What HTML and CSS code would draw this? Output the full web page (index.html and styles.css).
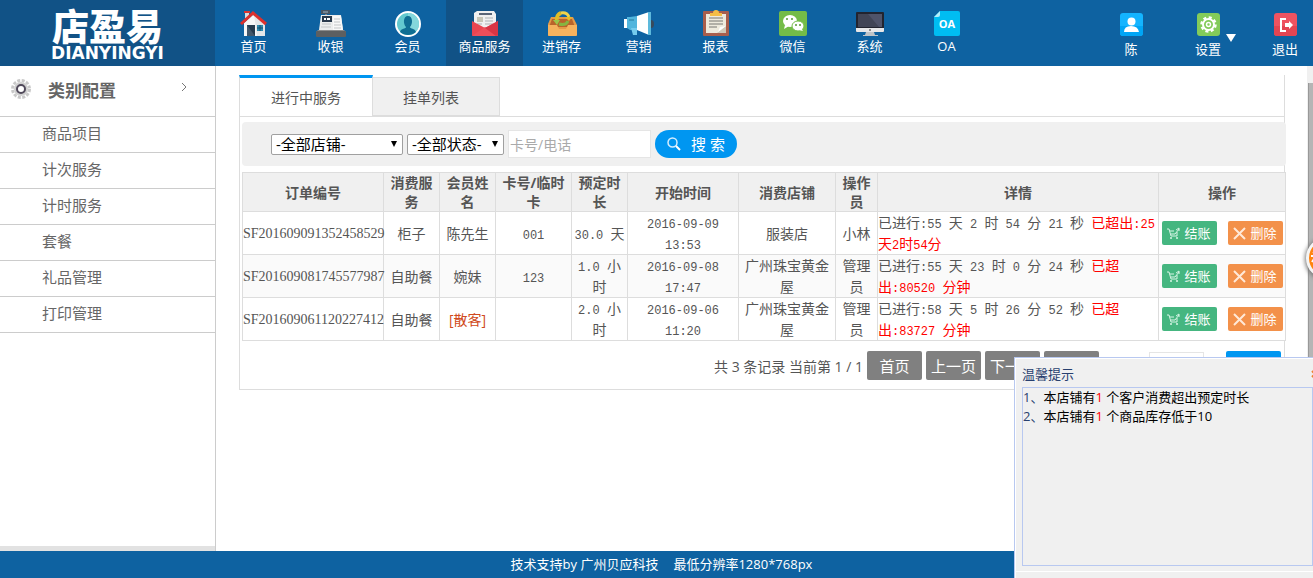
FILE: index.html
```html
<!DOCTYPE html>
<html lang="zh-CN">
<head>
    <meta charset="UTF-8">
    <meta name="viewport" content="width=device-width, initial-scale=1.0">
    <title>店盈易</title>
    <link rel="stylesheet" href="styles.css">
</head>
<body>
    <header class="header">
        <a class="logo" href="#">
            <span class="logo-cn">店盈易</span>
            <span class="logo-en">DIANYINGYI</span>
        </a>
        <nav class="nav">
            <a class="nav-item" href="#">
                <svg width="30" height="28" viewBox="0 0 30 28">
                    <path d="M6 1h4v7H6z" fill="#d7dbdf"/><path d="M5 1h6v2H5z" fill="#d9342f"/>
                    <path d="M5 13L15 4l11 9v13H5z" fill="#f7f7f7"/><path d="M15 4l11 9v13H18z" fill="#e4e6e8"/>
                    <path d="M8 15h8v11H8z" fill="#263a4d"/><path d="M8 15l8 11H8z" fill="#42576a"/>
                    <path d="M18 15h6v6h-6z" fill="#2c8bb0"/><path d="M21 15v6M18 18h6" stroke="#164f6e"/>
                    <path d="M2 14L14 3l13 11" fill="none" stroke="#dc302d" stroke-width="3"/>
                </svg>
                <span>首页</span>
            </a>
            <a class="nav-item" href="#">
                <svg width="30" height="28" viewBox="0 0 30 28">
                    <path d="M5 0h9v4H5z" fill="#485563"/><path d="M7 2h5" stroke="#9eb3c2"/><path d="M9 4h2v3H9z" fill="#778490"/>
                    <path d="M5 5h20l2 15H3z" fill="#eceded"/><path d="M17 6h8l2 14H17z" fill="#f8f8f8"/>
                    <path d="M6 6h10v6H6z" fill="#29394c"/><path d="M8 9h2M11 9h3" stroke="#fff" stroke-width="2"/>
                    <path d="M18 9h6M18 12h6M6 14h9M5 17h10M18 15h7M18 18h7" stroke="#c2c5c7"/>
                    <path d="M2 20h26l2 2H0z" fill="#8b8b8b"/><rect y="21" width="30" height="6" rx="1" fill="#5d5f61"/>
                </svg>
                <span>收银</span>
            </a>
            <a class="nav-item" href="#">
                <svg width="30" height="28" viewBox="0 0 30 28">
                    <circle cx="15" cy="14" r="12" fill="#62c9cf" stroke="#fff" stroke-width="2"/>
                    <path d="M15 3a11 11 0 0 1 0 22z" fill="#84d7dc"/>
                    <path d="M7 22c1-4 6-3 6-5-3-3-3-11 2-11s5 8 2 11c0 2 5 1 6 5-4 4-12 4-16 0z" fill="#0f6e93"/>
                </svg>
                <span>会员</span>
            </a>
            <a class="nav-item active" href="#">
                <svg width="30" height="28" viewBox="0 0 30 28">
                    <path d="M4 3l3-2h17l2 3v17H4z" fill="#f0f0f0"/>
                    <path d="M9 4h13" stroke="#596577" stroke-width="2"/><path d="M7 7h6v5H7z" fill="#c6c5b7"/>
                    <path d="M15 8h8M15 11h8M15 14h8M7 14h5" stroke="#adb2b5"/>
                    <path d="M2 11l13 7 13-7v14q0 1-1 1H3q-1 0-1-1z" fill="#eb4551"/>
                    <path d="M2 26l13-9 13 9z" fill="#ee4e5a"/><path d="M28 11L15 18l11 8 2-1z" fill="#d93545"/>
                </svg>
                <span>商品服务</span>
            </a>
            <a class="nav-item" href="#">
                <svg width="30" height="28" viewBox="0 0 30 28">
                    <path d="M4 7h22l4 8v10q0 1-2 1H2q-1 0-1-1V14z" fill="#e39a48"/><path d="M5 9h20l3 8H2z" fill="#b9642b"/>
                    <path d="M1 15h9l2 4h7l2-4h9v10q0 1-2 1H3q-2 0-2-1z" fill="#f5b25e"/>
                    <path d="M10 10a6 6 0 0 1 4-7" fill="none" stroke="#dfbc27" stroke-width="4"/>
                    <path d="M14 3q6-1 8 4" fill="none" stroke="#f0d34a" stroke-width="3"/><path d="M18 7h7l-3 4z" fill="#e5bd28"/>
                    <path d="M21 11q-2 5-9 3" fill="none" stroke="#86b540" stroke-width="3"/><path d="M6 10h7l-3 5z" fill="#9bc44a"/>
                </svg>
                <span>进销存</span>
            </a>
            <a class="nav-item" href="#">
                <svg width="30" height="28" viewBox="0 0 30 28">
                    <ellipse cx="27" cy="14" rx="3" ry="4" fill="#394a5b"/>
                    <path d="M0 9h4v9H0z" fill="#fff"/><path d="M3 7h3l7-1v14H6l-3-2z" fill="#51b5dd"/>
                    <path d="M7 18h6v7H9z" fill="#76cbed"/><path d="M13 6l12-4v23l-12-5z" fill="#fff"/><path d="M24 2h3v23h-3z" fill="#5db9dc"/>
                    <path d="M5 10h5" stroke="#267c9f"/>
                </svg>
                <span>营销</span>
            </a>
            <a class="nav-item" href="#">
                <svg width="30" height="28" viewBox="0 0 30 28">
                    <rect x="2" y="1" width="26" height="25" rx="1" fill="#a85e4d"/><path d="M5 4h20v19H5z" fill="#eeeadd"/>
                    <path d="M9 3h3a3 3 0 0 1 6 0h3v3H9z" fill="#f4bd45"/>
                    <path d="M8 8h14M8 11h14M8 14h14M8 17h8" stroke="#777772"/><path d="M16 23l9-7v7z" fill="#cfc8b8"/><path d="M17 22l2-5 6-1z" fill="#fff"/>
                </svg>
                <span>报表</span>
            </a>
            <a class="nav-item" href="#">
                <svg width="30" height="28" viewBox="0 0 30 28">
                    <rect x="1" y="1" width="28" height="25" rx="2" fill="#74bc48"/>
                    <ellipse cx="12" cy="11" rx="7" ry="6" fill="#fff"/><path d="M7 15l-1 4 5-3z" fill="#fff"/>
                    <ellipse cx="20" cy="16" rx="6" ry="5" fill="#fff" stroke="#74bc48"/><path d="M21 20l4 1-2-3z" fill="#fff"/>
                    <g fill="#579a35"><circle cx="9" cy="9" r="1"/><circle cx="14" cy="9" r="1"/><circle cx="18" cy="15" r="1"/><circle cx="22" cy="15" r="1"/></g>
                </svg>
                <span>微信</span>
            </a>
            <a class="nav-item" href="#">
                <svg width="30" height="28" viewBox="0 0 30 28">
                    <rect x="1" y="2" width="28" height="20" rx="1" fill="#22242f"/><path d="M3 4h24v13H3z" fill="#414556"/><path d="M13 4h14v13H24z" fill="#50546a"/>
                    <path d="M1 18h28v3q0 1-1 1H2q-1 0-1-1z" fill="#e6e7e9"/><path d="M15 19v2" stroke="#333"/>
                    <path d="M11 22h8l1 3h3v1H8v-1h2z" fill="#bfc4c8"/>
                </svg>
                <span>系统</span>
            </a>
            <a class="nav-item" href="#">
                <svg width="30" height="28" viewBox="0 0 30 28">
                    <path d="M8 1h18q2 0 2 2v21q0 2-2 2H4q-2 0-2-2V7z" fill="#00bdf2"/><path d="M2 7l6-6v4q0 2-2 2z" fill="#b2edfb"/>
                    <text class="oa-mark" x="15" y="18" text-anchor="middle">OA</text>
                </svg>
                <span>OA</span>
            </a>
        </nav>
        <div class="user-nav">
            <a class="user-item" href="#">
                <svg width="23" height="23" viewBox="0 0 23 23">
                    <rect width="23" height="23" rx="3" fill="#14b4ff"/><path d="M0 13h23v7q0 3-3 3H3q-3 0-3-3z" fill="#00a5f5"/>
                    <circle cx="11.500" cy="8.500" r="4" fill="#fff"/><path d="M4 19q0-6 7-6t8 6z" fill="#fff"/>
                </svg>
                <span>陈</span>
            </a>
            <a class="user-item has-menu" href="#">
                <svg width="23" height="23" viewBox="0 0 23 23">
                    <rect width="23" height="23" rx="3" fill="#83cb5a"/>
                    <circle cx="11.500" cy="11.500" r="7" fill="none" stroke="#fff" stroke-width="2.500" stroke-dasharray="3 2.500"/>
                    <circle cx="11.500" cy="11.500" r="5.500" fill="none" stroke="#fff" stroke-width="2"/><circle cx="11.500" cy="11.500" r="2" fill="none" stroke="#fff" stroke-width="1.500"/>
                </svg>
                <span>设置</span>
            </a>
            <a class="user-item" href="#">
                <svg width="23" height="23" viewBox="0 0 23 23">
                    <rect width="23" height="23" rx="3" fill="#ee5361"/><path d="M0 13h23v7q0 3-3 3H3q-3 0-3-3z" fill="#e44552"/>
                    <path d="M12 6H7v12h5" fill="none" stroke="#fff" stroke-width="2"/><path d="M11 10h4V8l4 4-4 4v-2h-4z" fill="#fff"/>
                </svg>
                <span>退出</span>
            </a>
        </div>
    </header>

    <div class="layout">
        <aside class="sidebar">
            <div class="side-title">
                <svg width="22" height="22" viewBox="0 0 22 22">
                    <circle cx="11" cy="11" r="8.500" fill="none" stroke="#c9c9c9" stroke-width="3" stroke-dasharray="3 1.500"/>
                    <circle cx="11" cy="11" r="7" fill="#cfcfcf"/><circle cx="11" cy="11" r="4" fill="#fff" stroke="#50495a" stroke-width="2"/>
                </svg>
                <h2>类别配置</h2>
                <svg class="side-arrow" width="6" height="8" viewBox="0 0 6 8"><path d="M1 0l4 4-4 4" fill="none" stroke="#777"/></svg>
            </div>
            <ul class="side-menu">
                <li><a href="#">商品项目</a></li>
                <li><a href="#">计次服务</a></li>
                <li><a href="#">计时服务</a></li>
                <li><a href="#">套餐</a></li>
                <li><a href="#">礼品管理</a></li>
                <li><a href="#">打印管理</a></li>
            </ul>
            <div class="side-foot"></div>
        </aside>

        <main class="main">
            <div class="tabs">
                <a class="tab current" href="#">进行中服务</a>
                <a class="tab" href="#">挂单列表</a>
            </div>
            <div class="panel">
                <form class="filter">
                    <div class="select select-shop">
                        <select aria-label="店铺"><option>-全部店铺-</option></select>
                    </div>
                    <div class="select select-state">
                        <select aria-label="状态"><option>-全部状态-</option></select>
                    </div>
                    <input class="keyword" type="text" placeholder="卡号/电话" aria-label="卡号/电话">
                    <button class="search" type="button">
                        <svg width="14" height="14" viewBox="0 0 14 14"><circle cx="5.500" cy="5.500" r="4.500" fill="none" stroke="#d3edff" stroke-width="1.500"/><path d="M9 9l4 4" stroke="#fff" stroke-width="2"/></svg>
                        搜 索
                    </button>
                </form>

                <table class="orders">
                    <colgroup>
                        <col class="c-no"><col class="c-short"><col class="c-short"><col class="c-card"><col class="c-short">
                        <col class="c-time"><col class="c-shop"><col class="c-oper"><col><col class="c-act">
                    </colgroup>
                    <thead>
                        <tr>
                            <th>订单编号</th>
                            <th>消费服务</th>
                            <th>会员姓名</th>
                            <th>卡号/临时卡</th>
                            <th>预定时长</th>
                            <th>开始时间</th>
                            <th>消费店铺</th>
                            <th>操作员</th>
                            <th>详情</th>
                            <th>操作</th>
                        </tr>
                    </thead>
                    <tbody>
                        <tr>
                            <td class="order-no">SF201609091352458529</td>
                            <td>柜子</td>
                            <td>陈先生</td>
                            <td><span class="num">001</span></td>
                            <td><span class="num">30.0 </span>天</td>
                            <td><span class="num">2016-09-09 13:53</span></td>
                            <td>服装店</td>
                            <td>小林</td>
                            <td class="detail">已进行<span class="num">:55 </span>天<span class="num"> 2 </span>时<span class="num"> 54 </span>分<span class="num"> 21 </span>秒<span class="num"> </span><span class="over">已超出<span class="num">:25</span>天<span class="num">2</span>时<span class="num">54</span>分</span></td>
                            <td>
                                <div class="actions">
                                    <button class="btn btn-pay" type="button"><svg width="13" height="13" viewBox="0 0 13 13"><path d="M0 2h2l2 7h6M3 4h4M4 7h4M8 7l4-5M9 3l3-2v3M10 5v4" fill="none" stroke="#d8f5e6"/><circle cx="4" cy="11" r="1" fill="#d8f5e6"/><circle cx="10" cy="11" r="1" fill="#d8f5e6"/></svg>结账</button>
                                    <button class="btn btn-del" type="button"><svg width="13" height="13" viewBox="0 0 13 13"><path d="M1 1l11 11M12 1L1 12" stroke="#ffe9d7" stroke-width="2"/></svg>删除</button>
                                </div>
                            </td>
                        </tr>
                        <tr>
                            <td class="order-no">SF201609081745577987</td>
                            <td>自助餐</td>
                            <td>婉妹</td>
                            <td><span class="num">123</span></td>
                            <td><span class="num">1.0 </span>小时</td>
                            <td><span class="num">2016-09-08 17:47</span></td>
                            <td>广州珠宝黄金屋</td>
                            <td>管理员</td>
                            <td class="detail">已进行<span class="num">:55 </span>天<span class="num"> 23 </span>时<span class="num"> 0 </span>分<span class="num"> 24 </span>秒<span class="num"> </span><span class="over">已超出<span class="num">:80520 </span>分钟</span></td>
                            <td>
                                <div class="actions">
                                    <button class="btn btn-pay" type="button"><svg width="13" height="13" viewBox="0 0 13 13"><path d="M0 2h2l2 7h6M3 4h4M4 7h4M8 7l4-5M9 3l3-2v3M10 5v4" fill="none" stroke="#d8f5e6"/><circle cx="4" cy="11" r="1" fill="#d8f5e6"/><circle cx="10" cy="11" r="1" fill="#d8f5e6"/></svg>结账</button>
                                    <button class="btn btn-del" type="button"><svg width="13" height="13" viewBox="0 0 13 13"><path d="M1 1l11 11M12 1L1 12" stroke="#ffe9d7" stroke-width="2"/></svg>删除</button>
                                </div>
                            </td>
                        </tr>
                        <tr>
                            <td class="order-no">SF201609061120227412</td>
                            <td>自助餐</td>
                            <td class="guest">[散客]</td>
                            <td></td>
                            <td><span class="num">2.0 </span>小时</td>
                            <td><span class="num">2016-09-06 11:20</span></td>
                            <td>广州珠宝黄金屋</td>
                            <td>管理员</td>
                            <td class="detail">已进行<span class="num">:58 </span>天<span class="num"> 5 </span>时<span class="num"> 26 </span>分<span class="num"> 52 </span>秒<span class="num"> </span><span class="over">已超出<span class="num">:83727 </span>分钟</span></td>
                            <td>
                                <div class="actions">
                                    <button class="btn btn-pay" type="button"><svg width="13" height="13" viewBox="0 0 13 13"><path d="M0 2h2l2 7h6M3 4h4M4 7h4M8 7l4-5M9 3l3-2v3M10 5v4" fill="none" stroke="#d8f5e6"/><circle cx="4" cy="11" r="1" fill="#d8f5e6"/><circle cx="10" cy="11" r="1" fill="#d8f5e6"/></svg>结账</button>
                                    <button class="btn btn-del" type="button"><svg width="13" height="13" viewBox="0 0 13 13"><path d="M1 1l11 11M12 1L1 12" stroke="#ffe9d7" stroke-width="2"/></svg>删除</button>
                                </div>
                            </td>
                        </tr>
                    </tbody>
                </table>

                <div class="pager">
                    <span>共 3 条记录 当前第 1 / 1</span>
                    <button class="page-btn" type="button">首页</button>
                    <button class="page-btn" type="button">上一页</button>
                    <button class="page-btn" type="button">下一页</button>
                    <button class="page-btn" type="button">末页</button>
                    <input class="page-no" type="text" aria-label="页码">
                    <button class="page-btn page-go" type="button">跳转</button>
                </div>
            </div>
        </main>
        <div class="scroll"><div class="scroll-thumb"></div></div>
    </div>

    <footer class="footer">
        <span>技术支持by 广州贝应科技</span>
        <span>最低分辨率1280*768px</span>
    </footer>

    <a class="float-ball" href="#" aria-label="客服">
        <svg width="12" height="20" viewBox="0 0 12 20"><path d="M3 4l3 2M1 8h8M6 8l-4 6M5 12v6" fill="none" stroke="#fff" stroke-width="2"/></svg>
    </a>

    <section class="notice">
        <div class="notice-head">
            <h3>温馨提示</h3>
            <button class="notice-close" type="button" aria-label="关闭"><svg width="8" height="8" viewBox="0 0 8 8"><path d="M1 1l6 6M7 1L1 7" stroke="#f08030" stroke-width="2"/></svg></button>
        </div>
        <div class="notice-body">
            <p>1、<a href="#">本店铺有<em>1</em> 个客户消费超出预定时长</a></p>
            <p>2、<a href="#">本店铺有<em>1</em> 个商品库存低于10</a></p>
        </div>
    </section>
</body>
</html>
```
FILE: styles.css
```css
* {
    box-sizing: border-box;
}

body {
    margin: 0;
    min-height: 100vh;
    display: flex;
    flex-direction: column;
    font-family: "Open Sans", "Noto Sans CJK SC", sans-serif;
    font-size: 14px;
    color: #555;
    background: #fff;
    overflow: hidden;
}

a {
    color: inherit;
    text-decoration: none;
}

h2, h3, p, ul {
    margin: 0;
    padding: 0;
}

svg {
    display: block;
    flex: none;
}

button, input, select {
    font-family: inherit;
    margin: 0;
}

/* header */
.header {
    display: flex;
    height: 66px;
    background: #0e62a1;
    color: #fff;
    font-size: 13px;
}

.logo {
    width: 215px;
    display: flex;
    flex-direction: column;
    align-items: center;
    padding-top: 8px;
    background: #115286;
}

.logo-cn {
    font-size: 37px;
    font-weight: 900;
    line-height: 37px;
}

.logo-en {
    font-family: "DejaVu Sans", sans-serif;
    font-size: 17px;
    font-weight: bold;
    line-height: 17px;
}

.nav {
    display: flex;
    flex: 1;
}

.nav-item {
    width: 77px;
    display: flex;
    flex-direction: column;
    align-items: center;
    padding-top: 10px;
    line-height: 17px;
}

.nav-item.active {
    background: #115286;
}

.oa-mark {
    font: bold 11px "Open Sans", sans-serif;
    fill: #fff;
}

.user-nav {
    display: flex;
    gap: 49px;
    padding: 13px 14px 0 0;
}

.user-item {
    position: relative;
    width: 28px;
    display: flex;
    flex-direction: column;
    align-items: center;
    gap: 5px;
    line-height: 17px;
}

.has-menu::after {
    content: "";
    position: absolute;
    left: 32px;
    top: 21px;
    border: 5px solid transparent;
    border-top: 8px solid #fff;
    border-bottom: 0;
}

/* layout */
.layout {
    display: flex;
    flex: 1;
}

.sidebar {
    width: 216px;
    display: flex;
    flex-direction: column;
    border-right: 1px solid #ccc;
}

.side-title {
    display: flex;
    align-items: center;
    height: 51px;
    padding: 0 28px 4px 10px;
    border-bottom: 1px solid #ccc;
}

.side-title h2 {
    flex: 1;
    margin-left: 16px;
    font-size: 17px;
    color: #666;
}

.side-arrow {
    margin-bottom: 4px;
}

.side-menu {
    list-style: none;
}

.side-menu a {
    display: block;
    height: 36px;
    padding-left: 42px;
    border-bottom: 1px solid #ccc;
    font-size: 15px;
    line-height: 32px;
    color: #666;
}

.side-foot {
    height: 5px;
    margin-top: auto;
    background: #e2e2e2;
}

.main {
    flex: 1;
    min-width: 0;
    padding: 9px 22px 0 23px;
}

.tabs {
    display: flex;
    align-items: flex-end;
    height: 41px;
    border-right: 1px solid #ddd;
}

.tab {
    width: 127px;
    height: 39px;
    padding-right: 10px;
    border: 1px solid #ddd;
    border-left: 0;
    background: #f0f0f0;
    line-height: 39px;
    text-align: center;
}

.tab.current {
    width: 134px;
    height: 41px;
    padding: 0;
    border-left: 1px solid #ddd;
    border-top: 3px solid #0096f1;
    border-bottom: 0;
    background: #fff;
}

.panel {
    border: 1px solid #ddd;
    padding: 5px 0 9px 2px;
}

.filter {
    display: flex;
    align-items: center;
    gap: 4px;
    height: 44px;
    margin-right: -2px;
    padding-left: 29px;
    border-radius: 4px;
    background: #f0f0f0;
}

.select {
    position: relative;
}

.select::after {
    content: "";
    position: absolute;
    right: 6px;
    top: 7px;
    border: 3px solid transparent;
    border-top: 6px solid #000;
    border-bottom: 0;
    pointer-events: none;
}

.select select {
    display: block;
    width: 100%;
    height: 21px;
    padding: 0 4px;
    appearance: none;
    border: 1px solid #a0a0a0;
    border-radius: 2px;
    background: #fff;
    color: #000;
    font-size: 15px;
    line-height: 19px;
}

.select-shop {
    width: 132px;
}

.select-state {
    width: 97px;
}

.keyword {
    width: 143px;
    height: 28px;
    padding: 0 1px;
    border: 1px solid #e5e5e5;
    background: #fff;
    font-size: 14px;
}

.keyword::placeholder {
    color: #aaa;
}

.search {
    display: flex;
    align-items: center;
    gap: 10px;
    width: 82px;
    height: 28px;
    padding: 0 0 0 12px;
    border: 0;
    border-radius: 14px;
    background: #0096f1;
    color: #fff;
    font-size: 15px;
    line-height: 20px;
    white-space: nowrap;
}

/* order table */
.orders {
    width: calc(100% + 2px);
    margin-top: 6px;
    table-layout: fixed;
    border-collapse: collapse;
    line-height: 21px;
}

.orders th, .orders td {
    padding: 0;
    border: 1px solid #ddd;
    text-align: center;
}

.orders th {
    height: 39px;
    background: #f0f0f0;
    line-height: 19px;
}

.orders td {
    height: 43px;
}

.orders tbody tr {
    background: #fff;
}

.orders tbody tr:nth-child(even) {
    background: #fafafa;
}

.c-no { width: 141px; }
.c-short { width: 56px; }
.c-card { width: 76px; }
.c-time { width: 111px; }
.c-shop { width: 97px; }
.c-oper { width: 42px; }
.c-act { width: 127px; }

.orders .order-no {
    font-family: "Liberation Serif", serif;
}

.num {
    font-family: "Liberation Mono", monospace;
    font-size: 12px;
    line-height: 12px;
}

.orders .detail {
    text-align: left;
}

.over {
    color: #f00;
}

.guest {
    color: #d04a20;
}

.actions {
    display: flex;
    justify-content: center;
    gap: 11px;
}

.btn {
    display: flex;
    align-items: center;
    justify-content: center;
    gap: 4px;
    width: 55px;
    height: 24px;
    padding: 0;
    border: 0;
    border-radius: 2px;
    color: #fff;
    font-size: 13px;
    line-height: 18px;
}

.btn-pay { background: #45b680; }
.btn-del { background: #f3914a; }

/* pager */
.pager {
    display: flex;
    align-items: center;
    justify-content: flex-end;
    gap: 4px;
    margin-top: 10px;
    padding-right: 3px;
}

.page-btn {
    width: 55px;
    height: 29px;
    padding: 0;
    border: 0;
    border-radius: 2px;
    background: #808080;
    color: #fff;
    font-size: 15px;
}

.page-no {
    width: 55px;
    height: 27px;
    margin: 0 18px 0 46px;
    border: 1px solid #e5e5e5;
}

.page-go {
    background: #0096f1;
}

.scroll {
    width: 6px;
    padding: 17px 0 0 1px;
    background: #f0f0f0;
}

.scroll-thumb {
    height: 100%;
    border-left: 1px solid #999;
    background: #b5b5b5;
}

.footer {
    display: flex;
    justify-content: center;
    gap: 15px;
    padding-left: 10px;
    background: #0e62a1;
    color: #fff;
    font-size: 13px;
    line-height: 27px;
}

/* floating parts */
.float-ball {
    position: fixed;
    right: -35px;
    top: 237px;
    width: 42px;
    height: 42px;
    display: flex;
    align-items: center;
    padding-left: 1px;
    border: 3px solid #f5f5f5;
    border-radius: 50%;
    background: #ff8410;
    box-shadow: 0 1px 4px 1px #777;
}

.notice {
    position: fixed;
    right: 0;
    bottom: 0;
    width: 299px;
    height: 221px;
    padding: 8px 0 0 7px;
    border: 1px solid #b8c8f0;
    border-width: 1px 0 0 1px;
    background: #f0f0f0;
    box-shadow: inset 1px 1px #fff;
    font-size: 13px;
    color: #28406f;
}

.notice-head {
    display: flex;
    justify-content: space-between;
    align-items: center;
    height: 21px;
    padding-bottom: 5px;
    overflow: hidden;
}

.notice-head h3 {
    font-size: 13px;
    font-weight: normal;
    line-height: 16px;
}

.notice-close {
    margin-right: -6px;
    padding: 0;
    border: 0;
    background: none;
}

.notice-body {
    height: 179px;
    border: 1px solid #b8c8f0;
    line-height: 19px;
}

.notice-body a {
    color: #000;
}

.notice-body em {
    color: #f00;
    font-style: normal;
}

.notice::after {
    content: "";
    display: block;
    margin: 5px 0 0 -7px;
    border-top: 1px solid #fff;
}
```
